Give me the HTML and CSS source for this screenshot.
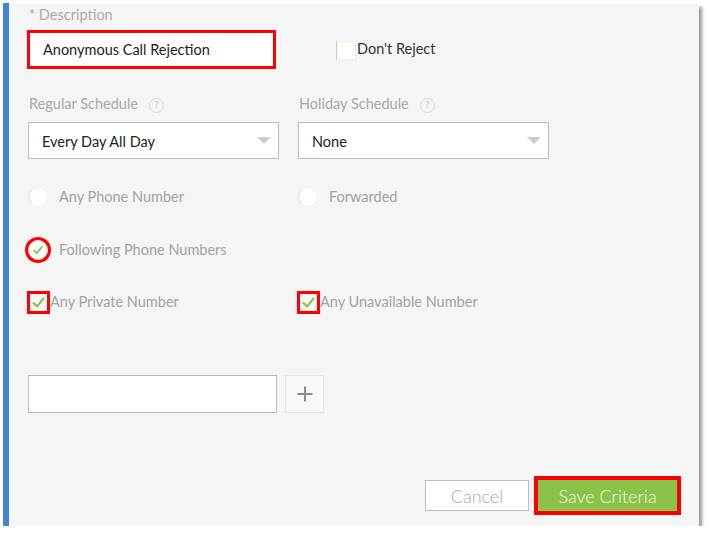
FILE: index.html
```html
<!DOCTYPE html>
<html lang="en">
<head>
<meta charset="utf-8">
<title>Criteria</title>
<link rel="stylesheet" href="styles.css">
</head>
<body>
<div class="panel">
  <div class="field-label">* Description</div>
  <div class="row-desc">
    <div class="text-input highlighted">Anonymous Call Rejection</div>
    <label class="dont-reject"><span class="plain-box"></span><span class="dark-text">Don't Reject</span></label>
  </div>

  <div class="schedule-grid">
    <div class="sched-label">Regular Schedule <span class="help">?</span></div>
    <div class="sched-label">Holiday Schedule <span class="help">?</span></div>
    <div class="select"><span class="select-text">Every Day All Day</span><span class="caret"></span></div>
    <div class="select"><span class="select-text">None</span><span class="caret"></span></div>
  </div>

  <div class="option-grid radios">
    <div class="option"><span class="radio"></span><span class="opt-text">Any Phone Number</span></div>
    <div class="option"><span class="radio"></span><span class="opt-text">Forwarded</span></div>
  </div>

  <div class="option-grid following">
    <div class="option"><span class="radio checked ringed"><svg viewBox="0 0 20 20" width="20" height="20"><polyline points="5.5,10.5 8.5,13.5 14.5,6.5" fill="none" stroke="#8bc34a" stroke-width="2" stroke-linecap="round" stroke-linejoin="round"/></svg></span><span class="opt-text">Following Phone Numbers</span></div>
  </div>

  <div class="option-grid checks">
    <div class="option tight"><span class="checkbox"><svg viewBox="0 0 17 17" width="17" height="17"><polyline points="3.5,9 7,12.5 13.5,4.5" fill="none" stroke="#8bc34a" stroke-width="2" stroke-linecap="round" stroke-linejoin="round"/></svg></span><span class="opt-text">Any Private Number</span></div>
    <div class="option tight"><span class="checkbox"><svg viewBox="0 0 17 17" width="17" height="17"><polyline points="3.5,9 7,12.5 13.5,4.5" fill="none" stroke="#8bc34a" stroke-width="2" stroke-linecap="round" stroke-linejoin="round"/></svg></span><span class="opt-text">Any Unavailable Number</span></div>
  </div>

  <div class="number-row">
    <div class="number-input"></div>
    <div class="plus-btn"><svg viewBox="0 0 18 18" width="18" height="18"><path d="M9 1.5V16.5M1.5 9H16.5" stroke="#8a8a8a" stroke-width="2" fill="none"/></svg></div>
  </div>

  <div class="footer">
    <div class="btn cancel">Cancel</div>
    <div class="btn save">Save Criteria</div>
  </div>
</div>
</body>
</html>
```
FILE: styles.css
```css
* { box-sizing: border-box; }
html, body { margin: 0; padding: 0; background: #ffffff; }
body {
  font-family: Lato, "Open Sans", "Liberation Sans", sans-serif;
  font-size: 14.5px;
}
.panel {
  margin: 3px 0 0 3px;
  width: 696px;
  height: 523px;
  background: #f5f5f5;
  border-left: 6px solid #3d86d3;
  box-shadow: 3px 4px 3px rgba(0, 0, 0, 0.4);
  padding: 4px 22px 15px 19px;
  display: flex;
  flex-direction: column;
}
.field-label {
  color: #ababab;
  line-height: 16px;
  height: 16px;
  padding-left: 1px;
}
.row-desc {
  margin-top: 7px;
  display: flex;
  align-items: center;
  margin-left: -1px;
}
.text-input {
  width: 249px;
  height: 39px;
  background: #fff;
  border: 3px solid #ff0000;
  padding-left: 13px;
  line-height: 33px;
  color: #222;
}
.dont-reject {
  margin-left: 60px;
  display: flex;
  align-items: center;
  margin-top: 2px;
}
.plain-box {
  width: 20px;
  height: 19px;
  background: #fff;
  border: 1px solid #ebebeb;
  border-left-color: #b9dc8f;
}
.dark-text { color: #333; line-height: 18px; margin-top: -4px; margin-left: 1px; }
.schedule-grid {
  margin-top: 26px;
  display: grid;
  grid-template-columns: 251px 251px;
  column-gap: 19px;
  row-gap: 9px;
}
.sched-label {
  color: #a8a8a8;
  line-height: 18px;
  height: 18px;
  display: flex;
  align-items: center;
  padding-left: 1px;
}
.help {
  display: inline-flex;
  width: 15px;
  height: 15px;
  border: 1px solid #dcdcdc;
  border-radius: 50%;
  align-items: center;
  justify-content: center;
  font-size: 9px;
  color: #c4c4c4;
  margin-left: 11px;
  margin-top: 2px;
}
.select {
  height: 37px;
  background: #fff;
  border: 1px solid #bdbdbd;
  display: flex;
  align-items: center;
  justify-content: space-between;
  padding: 2px 7px 0 13px;
}
.select-text { color: #222; }
.caret {
  width: 0;
  height: 0;
  border-left: 7.5px solid transparent;
  border-right: 7.5px solid transparent;
  border-top: 7px solid #cccccc;
  margin-top: -2px;
}
.option-grid {
  display: grid;
  grid-template-columns: 251px 251px;
  column-gap: 19px;
}
.radios { margin-top: 28px; }
.following { margin-top: 33px; }
.checks { margin-top: 34px; }
.option {
  display: flex;
  align-items: center;
  height: 20px;
}
.option.tight { height: 17px; }
.radio {
  width: 20px;
  height: 20px;
  border-radius: 50%;
  background: #fff;
  border: 1px solid #eeeeee;
  border-left-color: #d2e6b8;
  flex: none;
  display: flex;
  align-items: center;
  justify-content: center;
}
.radio svg { display: block; }
.ringed { box-shadow: 0 0 0 3px #ff0000; }
.checked { border-color: #dde9cc; }
.opt-text {
  color: #a3a3a3;
  margin-left: 11px;
  line-height: 18px;
}
.checkbox {
  width: 17px;
  height: 17px;
  margin-left: 2px;
  background: #f7f7f7;
  outline: 3px solid #ff0000;
  flex: none;
  display: block;
}
.checkbox svg { display: block; }
.tight .opt-text { margin-left: 3px; margin-top: -2px; }
.number-row {
  margin-top: 64px;
  display: flex;
  gap: 8px;
}
.number-input {
  width: 249px;
  height: 38px;
  background: #fff;
  border: 1px solid #b8b8b8;
}
.plus-btn {
  width: 39px;
  height: 38px;
  background: #f8f8f8;
  border: 1px solid #e6e6e6;
  display: flex;
  align-items: center;
  justify-content: center;
}
.plus-btn svg { display: block; }
.footer {
  margin-top: auto;
  display: flex;
  justify-content: flex-end;
  gap: 9px;
}
.btn {
  height: 31px;
  font-size: 18px;
  font-weight: 300;
  display: flex;
  align-items: center;
  justify-content: center;
}
.cancel {
  width: 104px;
  background: #fff;
  border: 1px solid #bdbdbd;
  color: #a6a6a6;
}
.save {
  width: 139px;
  background: #8bc34a;
  color: #f4f7e8;
  outline: 4px solid #ff0000;
}
```
